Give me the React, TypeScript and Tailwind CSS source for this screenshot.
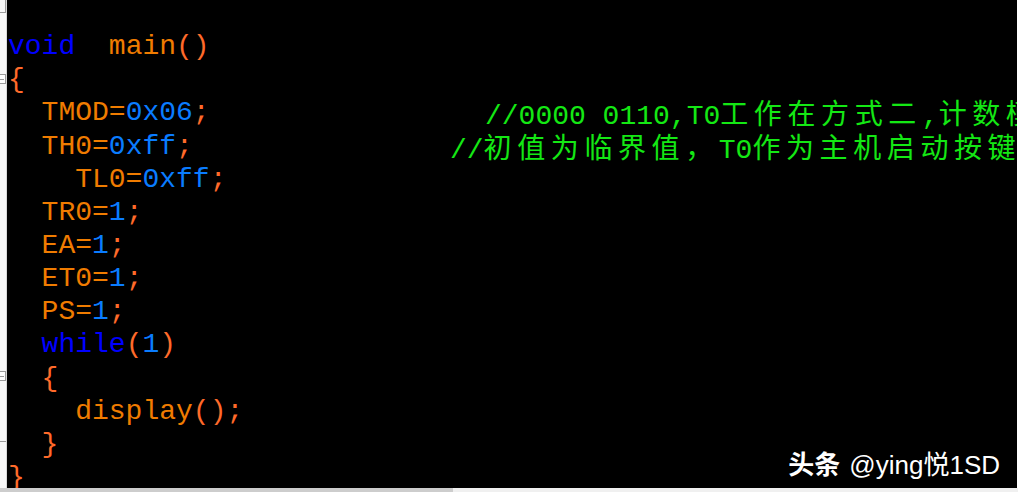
import * as React from "react";

type Tok = { t: string; c: string };

const KW = "text-[#0000ff]";
const ID = "text-[#f07c00]";
const NUM = "text-[#0a7cff]";
const PU = "text-[#ff6a2a]";

const k = (t: string) => ({ t, c: KW });
const id = (t: string) => ({ t, c: ID });
const n = (t: string) => ({ t, c: NUM });
const p = (t: string) => ({ t, c: PU });

type Line = { code: Tok[]; codeWidth?: string; comment?: string[] };

const lines: Line[] = [
  { code: [] },
  { code: [k("void"), id("  main"), p("()")] },
  { code: [p("{")] },
  {
    code: [id("  TMOD="), n("0x06"), p(";")],
    codeWidth: "w-[477px]",
    comment: ["//0000 0110,T0", "工作在方式二", ",", "计数模式"],
  },
  {
    code: [id("  TH0="), n("0xff"), p(";")],
    codeWidth: "w-[442px]",
    comment: ["//", "初值为临界值，", "T0", "作为主机启动按键"],
  },
  { code: [id("    TL0="), n("0xff"), p(";")] },
  { code: [id("  TR0="), n("1"), p(";")] },
  { code: [id("  EA="), n("1"), p(";")] },
  { code: [id("  ET0="), n("1"), p(";")] },
  { code: [id("  PS="), n("1"), p(";")] },
  { code: [id("  "), k("while"), p("("), n("1"), p(")")] },
  { code: [p("  {")] },
  { code: [id("    display"), p("();")] },
  { code: [p("  }")] },
  { code: [p("}")] },
];

function Comment({ parts }: { parts: string[] }) {
  return (
    <span className="text-[#14e814]">
      {parts.map((s, i) =>
        i % 2 === 0 ? (
          <span key={i}>{s}</span>
        ) : (
          <span key={i} className="font-['Noto_Sans_CJK_SC',sans-serif] tracking-[5.6px]">
            {s}
          </span>
        )
      )}
    </span>
  );
}

function Gutter() {
  return (
    <div className="relative w-[7px] shrink-0 bg-[#f7f7f7] border-r border-[#d8d8d8]">
      <div className="absolute left-[5px] top-0 h-[12px] w-px bg-[#9a9a9a]" />
      <div className="absolute left-0 top-[12px] h-px w-[6px] bg-[#9a9a9a]" />
      <div className="absolute -left-[4px] top-[74px] h-[10px] w-[10px] border border-[#9a9a9a] bg-white">
        <div className="mt-[3.5px] ml-[1px] h-px w-[6px] bg-[#9a9a9a]" />
      </div>
      <div className="absolute -left-[4px] top-[371px] h-[10px] w-[10px] border border-[#9a9a9a] bg-white">
        <div className="mt-[3.5px] ml-[1px] h-px w-[6px] bg-[#9a9a9a]" />
      </div>
      <div className="absolute left-0 top-[441px] h-px w-[6px] bg-[#9a9a9a]" />
    </div>
  );
}

export default function App() {
  return (
    <div className="flex h-[492px] w-[1018px] flex-col overflow-hidden bg-[#f0f0f0]">
      <div className="flex min-h-0 flex-1">
        <Gutter />
        <div className="relative min-w-0 flex-1 overflow-hidden bg-black pl-[1px]">
          <div className="-mt-[3px] whitespace-pre font-['Liberation_Mono',monospace] text-[28px] leading-[33.15px]">
            {lines.map((line, i) => (
              <div key={i} className="flex h-[33.15px] whitespace-pre">
                <span className={line.codeWidth ? `${line.codeWidth} shrink-0` : ""}>
                  {line.code.map((tok, j) => (
                    <span key={j} className={tok.c}>
                      {tok.t}
                    </span>
                  ))}
                </span>
                {line.comment && <Comment parts={line.comment} />}
              </div>
            ))}
          </div>
          <div className="absolute bottom-[10px] right-[17px] flex items-baseline gap-[9px] font-['Liberation_Sans','Noto_Sans_CJK_SC',sans-serif] text-[26px] leading-none text-white">
            <span className="font-bold">头条</span>
            <span>@ying悦1SD</span>
          </div>
        </div>
        <div className="w-px shrink-0 bg-white" />
      </div>
      <div className="flex h-[4px] shrink-0">
        <div className="w-[453px] bg-[#cdcdcd]" />
        <div className="flex-1 bg-[#f0f0f0]" />
      </div>
    </div>
  );
}
